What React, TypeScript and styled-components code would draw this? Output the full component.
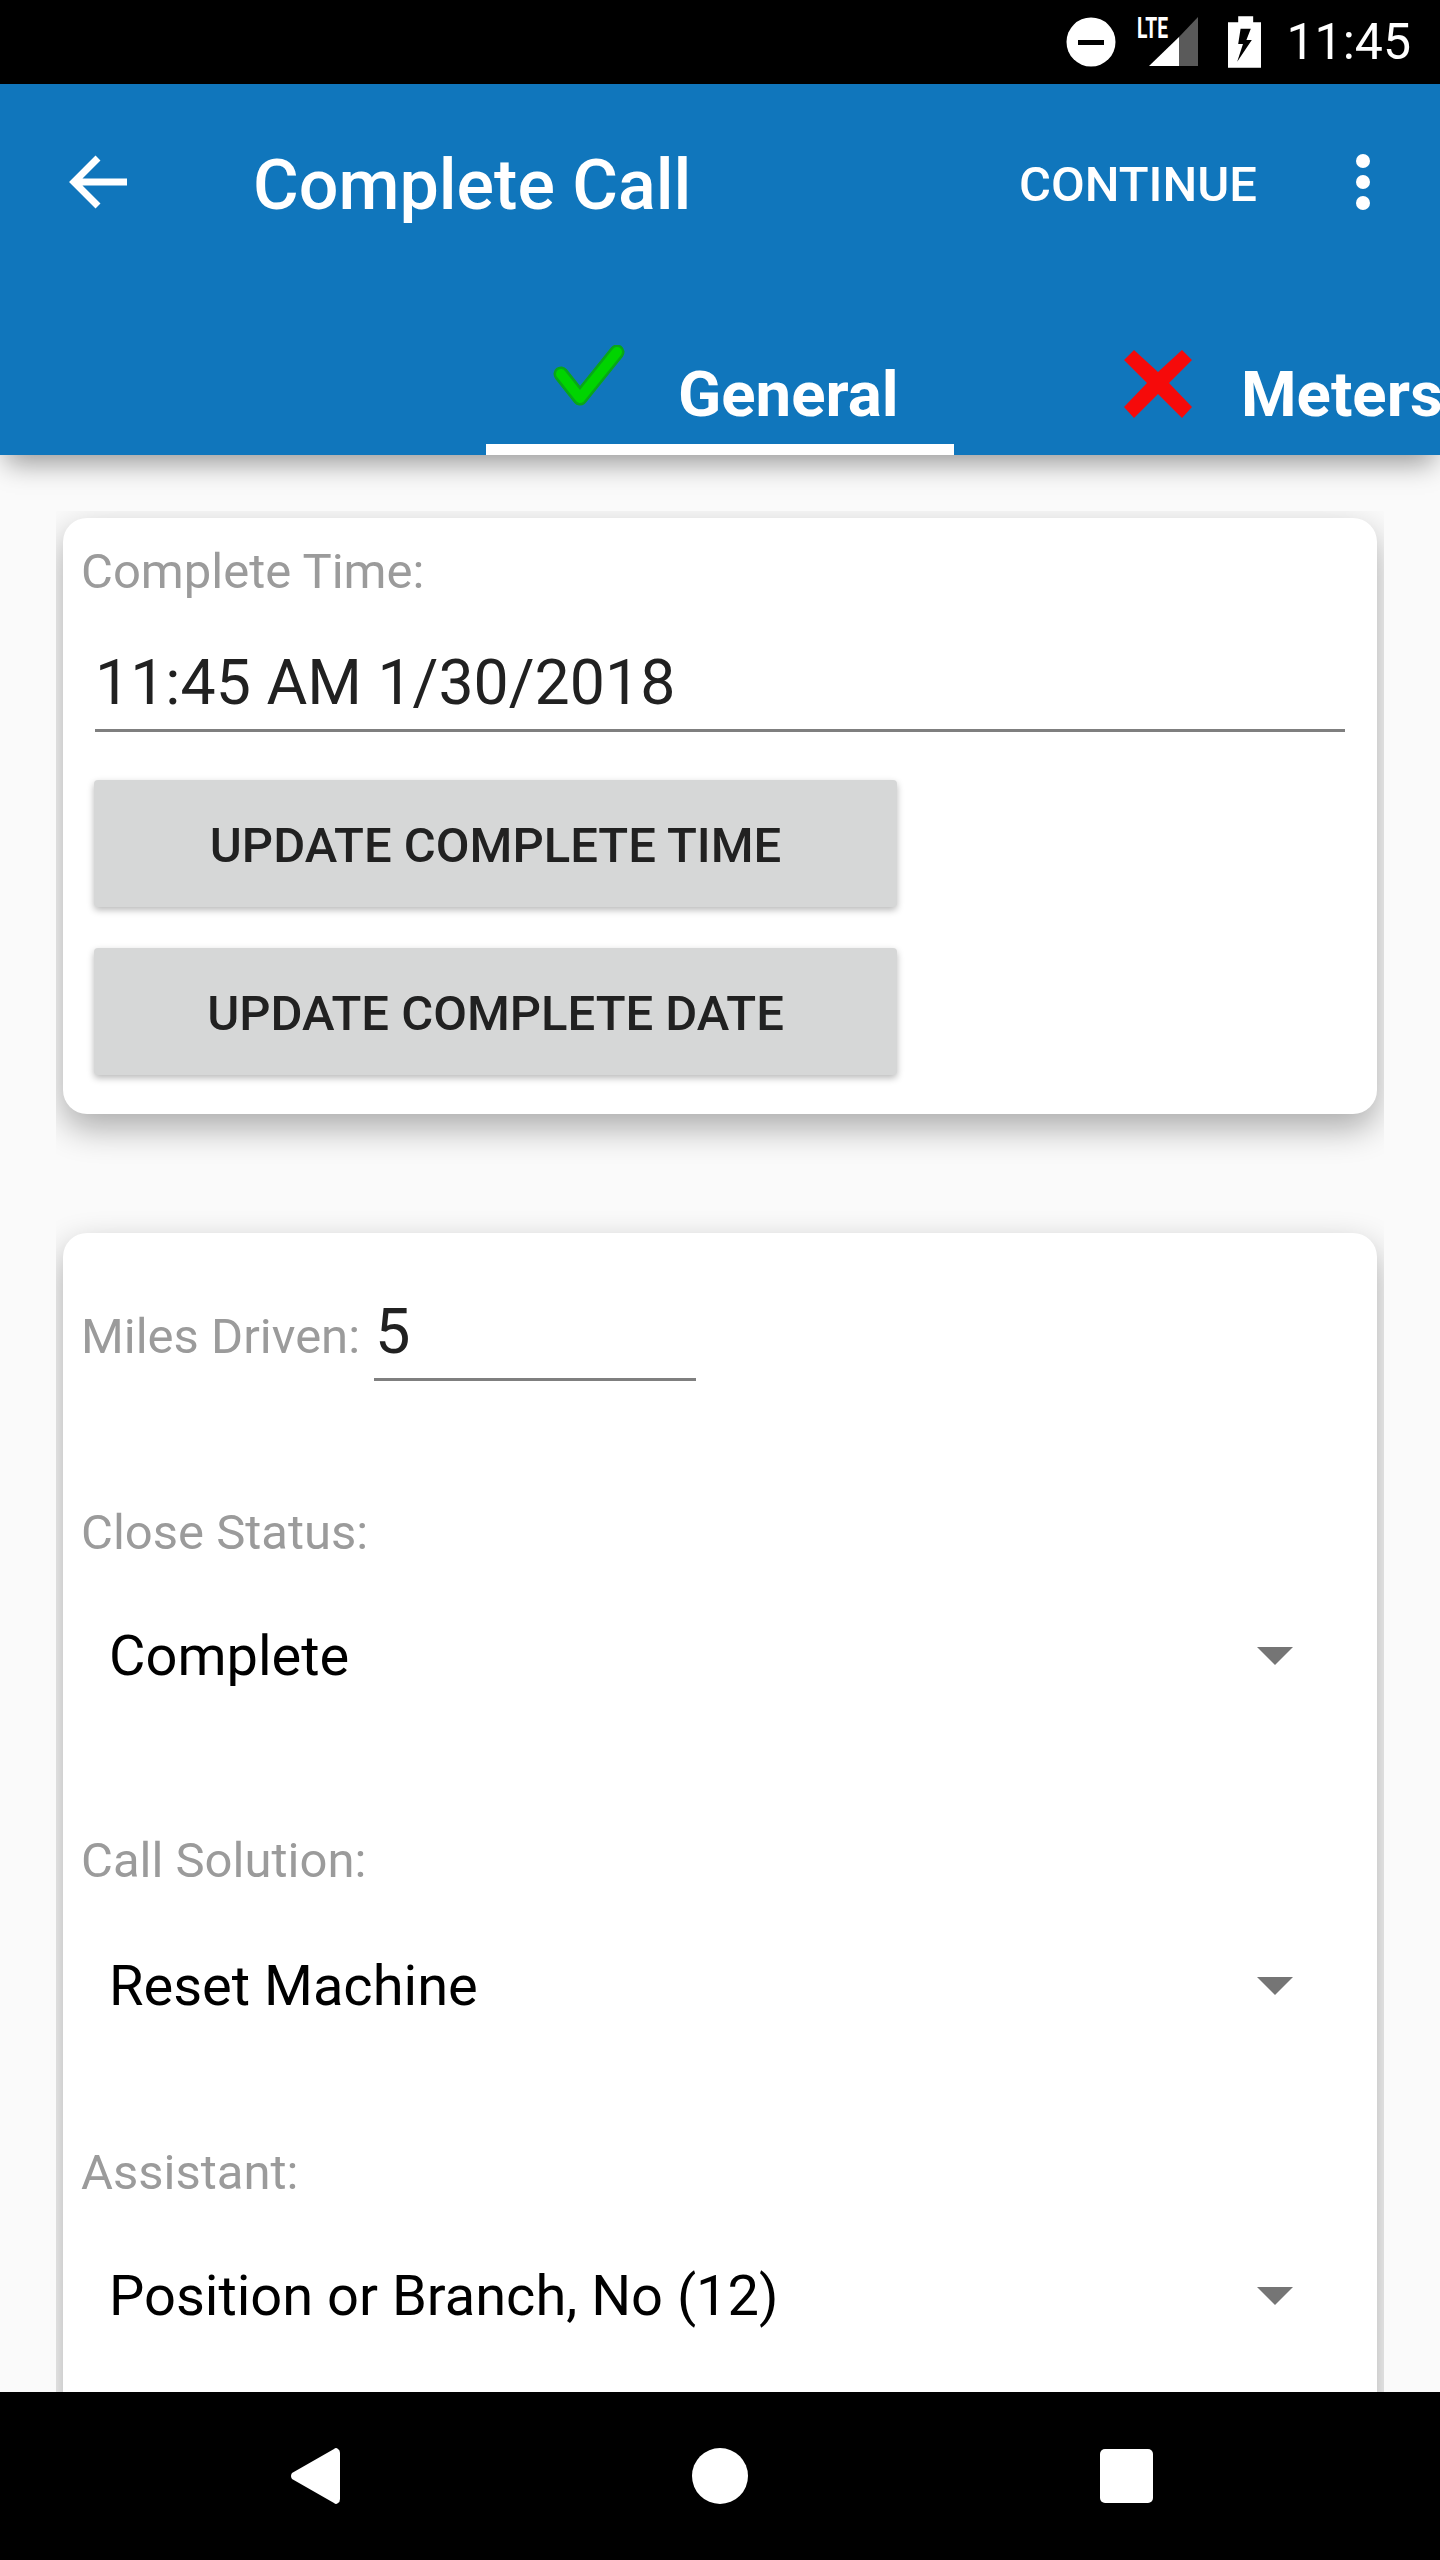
import React from "react";
import styled, { createGlobalStyle } from "styled-components";

const Global = createGlobalStyle`
  html, body { margin: 0; padding: 0; background: #fafafa; }
  * { box-sizing: border-box; }
`;

const Screen = styled.div`
  width: 1440px;
  height: 2560px;
  display: flex;
  flex-direction: column;
  overflow: hidden;
  font-family: Roboto, "Liberation Sans", sans-serif;
  background: #fafafa;
`;

const StatusBar = styled.div`
  flex: none;
  height: 84px;
  background: #000;
  display: flex;
  align-items: center;
  justify-content: flex-end;
  padding-right: 29px;
  color: #fff;
`;

const StatusIcon = styled.svg<{ $gap: number }>`
  flex: none;
  display: block;
  margin-right: ${(p) => p.$gap}px;
`;

const Clock = styled.span`
  font-size: 50px;
  line-height: 84px;
  white-space: nowrap;
`;

const AppBar = styled.header`
  flex: none;
  height: 371px;
  background: #1076bc;
  display: flex;
  flex-direction: column;
  position: relative;
  z-index: 2;
  box-shadow: 0 14px 26px -6px rgba(0, 0, 0, 0.4);
`;

const Toolbar = styled.div`
  height: 196px;
  display: flex;
  align-items: center;
  padding-left: 68px;
  color: #fff;
`;

const BackIcon = styled.svg`
  display: block;
  flex: none;
  margin-right: 122px;
`;

const Title = styled.h1`
  flex: 1;
  margin: 0;
  padding-top: 5px;
  font-size: 70px;
  line-height: 84px;
  font-weight: 500;
`;

const Action = styled.span`
  padding-top: 5px;
  font-size: 49px;
  line-height: 60px;
  font-weight: 500;
  margin-right: 99px;
`;

const Overflow = styled.svg`
  display: block;
  flex: none;
  margin-right: 70px;
`;

const TabStrip = styled.div`
  flex: 1;
  display: flex;
  align-items: stretch;
  padding-left: 486px;
  overflow: hidden;
`;

const Tab = styled.div<{ $width: number; $inset: number; $active?: boolean }>`
  flex: none;
  width: ${(p) => p.$width}px;
  padding-left: ${(p) => p.$inset}px;
  border-bottom: 11px solid ${(p) => (p.$active ? "#fff" : "transparent")};
  display: flex;
  align-items: flex-start;
`;

const TabIcon = styled.svg<{ $top: number; $gap: number }>`
  display: block;
  flex: none;
  margin-top: ${(p) => p.$top}px;
  margin-right: ${(p) => p.$gap}px;
`;

const TabLabel = styled.span`
  margin-top: 75px;
  font-size: 63.5px;
  line-height: 80px;
  font-weight: 700;
  color: #fff;
  white-space: nowrap;
`;

const Content = styled.main`
  flex: 1;
  min-height: 0;
  margin: 56px 56px 0;
  padding: 7px;
  overflow: hidden;
  display: flex;
  flex-direction: column;
  gap: 119px;
`;

const Card = styled.section<{ $bottom: number }>`
  flex: none;
  background: #fff;
  border-radius: 24px;
  padding: 24px 32px ${(p) => p.$bottom}px 18px;
  box-shadow: 0 14px 34px rgba(0, 0, 0, 0.32);
`;

const Label = styled.div<{ $top?: number }>`
  font-size: 49px;
  line-height: 60px;
  color: #9b9b9b;
  white-space: nowrap;
  margin-top: ${(p) => p.$top ?? 0}px;
`;

const TimeField = styled.div`
  margin: 41px 0 0 14px;
  height: 89px;
  border-bottom: 3px solid #7f7f7f;
  font-size: 62.6px;
  line-height: 80px;
  color: #212121;
`;

const RaisedButton = styled.div<{ $top: number }>`
  width: 803px;
  height: 127px;
  margin: ${(p) => p.$top}px 0 0 13px;
  padding-top: 4px;
  background: #d6d7d7;
  border-radius: 4px;
  box-shadow: 0 3px 7px rgba(0, 0, 0, 0.28);
  display: flex;
  align-items: center;
  justify-content: center;
  font-size: 49px;
  font-weight: 500;
  color: #212121;
`;

const InlineRow = styled.div`
  display: flex;
  align-items: baseline;
  margin-top: 35px;
`;

const InlineField = styled.div`
  margin-left: 14px;
  width: 322px;
  height: 89px;
  padding-left: 1px;
  border-bottom: 3px solid #7f7f7f;
  font-size: 63px;
  line-height: 80px;
  color: #212121;
`;

const Select = styled.div<{ $top: number }>`
  display: flex;
  align-items: center;
  justify-content: space-between;
  height: 72px;
  margin-top: ${(p) => p.$top}px;
  padding: 0 52px 0 28px;
  font-size: 56px;
  line-height: 72px;
  color: #000;
`;

const Caret = styled.svg`
  display: block;
  flex: none;
`;

const NavBar = styled.nav`
  flex: none;
  height: 168px;
  background: #000;
  position: relative;
  z-index: 3;
  display: flex;
  align-items: center;
  padding-left: 290px;
`;

const NavIcon = styled.svg<{ $gap: number }>`
  display: block;
  flex: none;
  margin-right: ${(p) => p.$gap}px;
`;

const selects = [
  { label: "Close Status:", value: "Complete", top: 122, gap: 57 },
  { label: "Call Solution:", value: "Reset Machine", top: 139, gap: 59 },
  { label: "Assistant:", value: "Position or Branch, No (12)", top: 121, gap: 57 },
];

export default function App() {
  return (
    <Screen>
      <Global />
      <StatusBar>
        <StatusIcon $gap={21} width="50" height="50" viewBox="0 0 50 50">
          <circle cx="25" cy="25" r="24.5" fill="#fff" />
          <rect x="12" y="23" width="26" height="5" fill="#000" />
        </StatusIcon>
        <StatusIcon $gap={30} width="61" height="50" viewBox="0 0 61 50">
          <text x="0" y="21" fill="#fff" fontFamily="Roboto" fontWeight="700" fontSize="29" textLength="31" lengthAdjust="spacingAndGlyphs">LTE</text>
          <path d="M12 49 L42 20 V49 Z" fill="#fff" />
          <path d="M42 20 L61 0 V49 H42 Z" fill="#5a5a5a" />
        </StatusIcon>
        <StatusIcon $gap={25} width="33" height="52" viewBox="0 0 97 152">
          <path d="M30 0 H74 V18 H97 V152 H0 V18 H30 Z" fill="#fff" />
          <path d="M67 37 H37 L30 82 H44 L27 134 L70 70 H54 Z" fill="#000" />
        </StatusIcon>
        <Clock>11:45</Clock>
      </StatusBar>
      <AppBar>
        <Toolbar>
          <BackIcon width="63" height="56" viewBox="0 0 63 56">
            <path d="M59 28 H7 M30 4 L6 28 L30 52" fill="none" stroke="#fff" strokeWidth="7" />
          </BackIcon>
          <Title>Complete Call</Title>
          <Action>CONTINUE</Action>
          <Overflow width="14" height="56" viewBox="0 0 14 56">
            <circle cx="7" cy="7" r="7" fill="#fff" />
            <circle cx="7" cy="28" r="7" fill="#fff" />
            <circle cx="7" cy="49" r="7" fill="#fff" />
          </Overflow>
        </Toolbar>
        <TabStrip>
          <Tab $width={468} $inset={67} $active>
            <TabIcon $top={65} $gap={52} width="73" height="64" viewBox="0 0 73 64">
              <polyline points="8,29 27,53 64,7" fill="none" stroke="#08a618" strokeWidth="15" strokeLinecap="round" strokeLinejoin="round" />
              <polyline points="8,29 27,53 64,7" fill="none" stroke="#00d400" strokeWidth="10" strokeLinecap="round" strokeLinejoin="round" />
            </TabIcon>
            <TabLabel>General</TabLabel>
          </Tab>
          <Tab $width={700} $inset={170}>
            <TabIcon $top={68} $gap={49} width="68" height="71" viewBox="0 0 68 71">
              <path d="M0 12 L10 2 L34 24 L58 2 L68 12 L45 35 L68 59 L58 70 L34 46 L10 70 L0 59 L23 35 Z" fill="#f60a0a" />
            </TabIcon>
            <TabLabel>Meters</TabLabel>
          </Tab>
        </TabStrip>
      </AppBar>
      <Content>
        <Card $bottom={39}>
          <Label>Complete Time:</Label>
          <TimeField>11:45 AM 1/30/2018</TimeField>
          <RaisedButton $top={48}>UPDATE COMPLETE TIME</RaisedButton>
          <RaisedButton $top={41}>UPDATE COMPLETE DATE</RaisedButton>
        </Card>
        <Card $bottom={200}>
          <InlineRow>
            <Label>Miles Driven:</Label>
            <InlineField>5</InlineField>
          </InlineRow>
          {selects.map((s) => (
            <React.Fragment key={s.label}>
              <Label $top={s.top}>{s.label}</Label>
              <Select $top={s.gap}>
                {s.value}
                <Caret width="36" height="18" viewBox="0 0 36 18">
                  <path d="M0 0 H36 L18 18 Z" fill="#757575" />
                </Caret>
              </Select>
            </React.Fragment>
          ))}
        </Card>
      </Content>
      <NavBar>
        <NavIcon $gap={352} width="50" height="58" viewBox="0 0 50 58">
          <path d="M44 2 Q46 0 48 2 Q50 3 50 6 V52 Q50 55 48 56 Q46 58 44 56 L2 32 Q0 29 2 26 Z" fill="#fff" />
        </NavIcon>
        <NavIcon $gap={352} width="56" height="56" viewBox="0 0 56 56">
          <circle cx="28" cy="28" r="28" fill="#fff" />
        </NavIcon>
        <NavIcon $gap={0} width="53" height="54" viewBox="0 0 53 54">
          <rect width="53" height="54" rx="5" fill="#fff" />
        </NavIcon>
      </NavBar>
    </Screen>
  );
}
